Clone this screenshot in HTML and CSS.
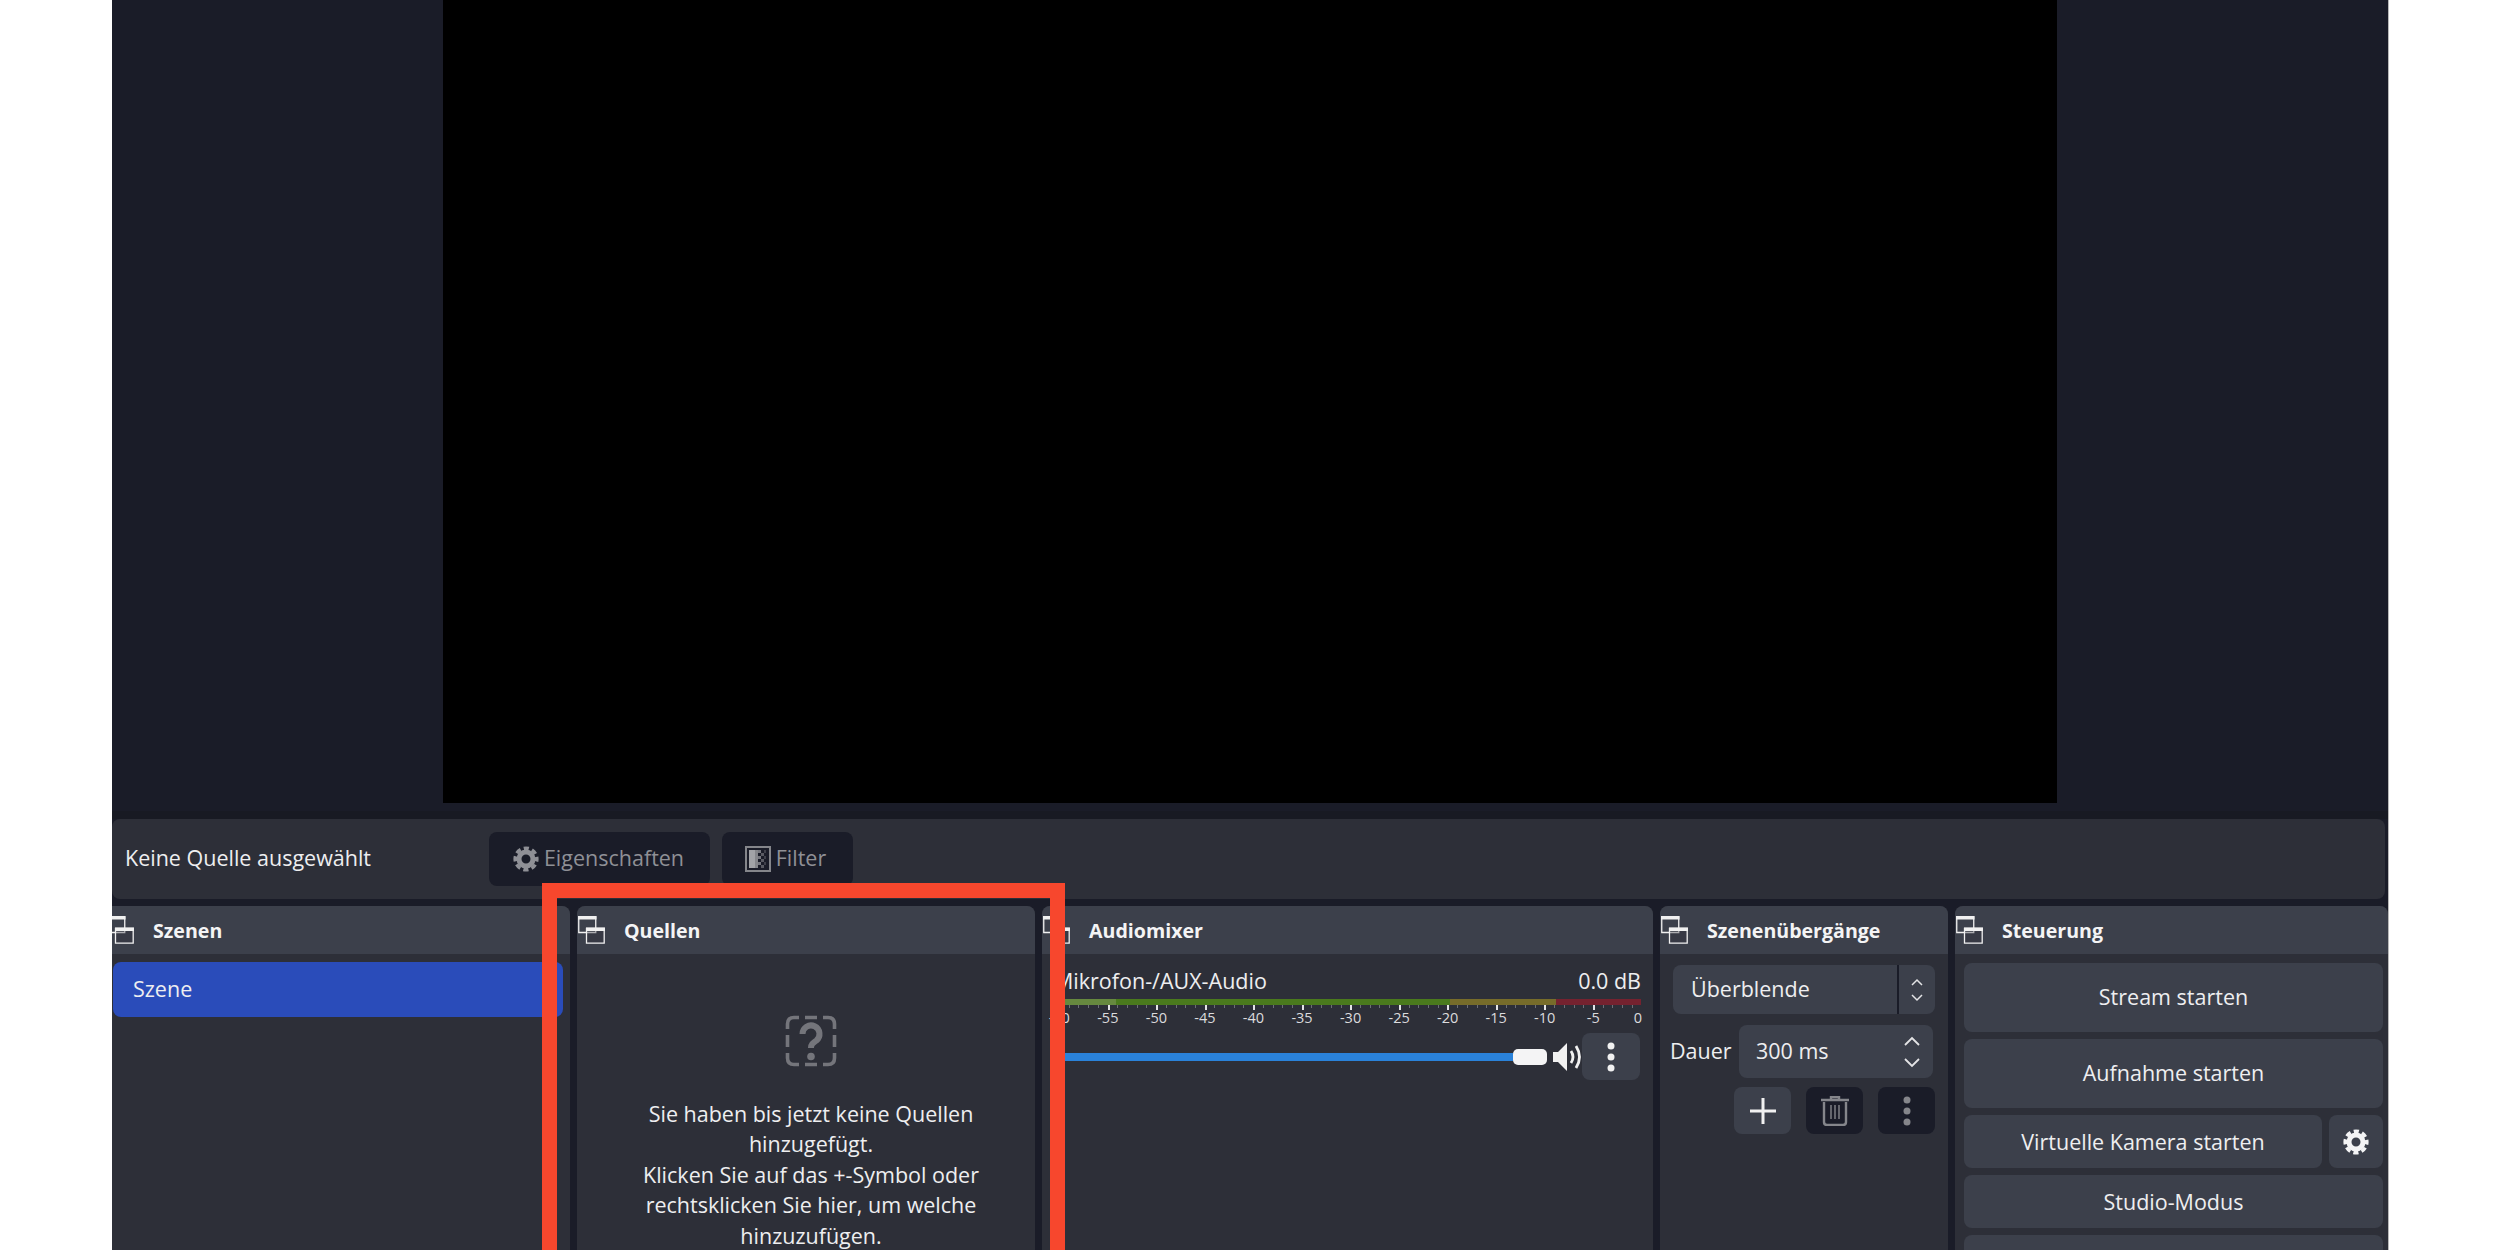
FILE: index.html
```html
<!DOCTYPE html>
<html lang="de">
<head>
    <meta charset="UTF-8">
    <title>OBS Studio</title>
    <link rel="stylesheet" href="styles.css">
</head>
<body>

    <svg class="defs" width="0" height="0">
        <symbol id="gear" viewBox="0 0 26 26">
            <circle cx="13" cy="13" r="7" fill="none" stroke="currentColor" stroke-width="5"></circle>
            <circle cx="13" cy="13" r="10.8" fill="none" stroke="currentColor" stroke-width="3.6" stroke-dasharray="5.2 3.28" stroke-dashoffset="2.6"></circle>
        </symbol>
        <symbol id="dock" viewBox="0 0 27 28">
            <path d="M.75 1h17v15.5H.75z" fill="none" stroke="currentColor" stroke-width="1.3"></path>
            <path d="M0 0h18.5v3.5H0z" fill="currentColor"></path>
            <path d="M8.5 12.5h17.7v14.7H8.5z" fill="#2d2f38" fill-opacity=".35" stroke="currentColor" stroke-width="1.3"></path>
            <path d="M8 11.5h19v3.5H8z" fill="currentColor"></path>
        </symbol>
        <symbol id="dots" viewBox="0 0 10 32">
            <circle cx="5" cy="5" r="3.5" fill="currentColor"></circle>
            <circle cx="5" cy="16" r="3.5" fill="currentColor"></circle>
            <circle cx="5" cy="27" r="3.5" fill="currentColor"></circle>
        </symbol>
    </svg>

    <div class="app">
        <div class="preview-area">
            <div class="preview"></div>
        </div>

        <div class="source-bar">
            <span class="source-name">Keine Quelle ausgewählt</span>
            <button class="btn-dark btn-props"><svg class="icon-gear"><use href="#gear"></use></svg>Eigenschaften</button>
            <button class="btn-dark btn-filter">
                <svg class="icon-filter" viewBox="0 0 26 26">
                    <rect x="1" y="1" width="24" height="24" fill="none" stroke="#85868b" stroke-width="2"></rect>
                    <rect x="4" y="4" width="6" height="18" fill="#a2a3a7"></rect>
                    <rect x="10" y="4" width="3" height="18" fill="#85868b"></rect>
                    <path d="M13 4h3v3h-3zM13 10h3v3h-3zM13 16h3v3h-3z" fill="#787980"></path>
                    <path d="M16 7h3v3h-3zM16 13h3v3h-3zM16 19h3v3h-3z" fill="#5a5b63"></path>
                    <path d="M19 4h2v3h-2zM19 10h2v3h-2zM19 16h2v3h-2z" fill="#3f404a"></path>
                </svg>Filter
            </button>
        </div>

        <div class="docks">
            <section class="dock dock-first">
                <div class="dock-head"><svg class="icon-dock"><use href="#dock"></use></svg><h2>Szenen</h2></div>
                <div class="scene-row">Szene</div>
            </section>

            <section class="dock">
                <div class="dock-head"><svg class="icon-dock"><use href="#dock"></use></svg><h2>Quellen</h2></div>
                <div class="empty">
                    <svg class="icon-empty" viewBox="0 0 52 52">
                        <path d="M2.5 14V9q0-6.500 6.500-6.500h5M38 2.500h5q6.500 0 6.500 6.500v5M49.500 38v5q0 6.500-6.500 6.500h-5M14 49.500H9q-6.500 0-6.500-6.500v-5M20 2.500h12M20 49.500h12M2.500 20v12M49.500 20v12" fill="none" stroke="#74757b" stroke-width="3.6"></path>
                        <path d="M17.500 19a8.500 8.500 0 1 1 13.800 6.600c-3.600 2.600-5.300 3.800-5.300 7.400" fill="none" stroke="#74757b" stroke-width="6"></path>
                        <circle cx="26" cy="41.500" r="3.800" fill="#74757b"></circle>
                    </svg>
                    <p>Sie haben bis jetzt keine Quellen<br>hinzugefügt.<br>Klicken Sie auf das +-Symbol oder<br>rechtsklicken Sie hier, um welche<br>hinzuzufügen.</p>
                </div>
            </section>

            <section class="dock">
                <div class="dock-head"><svg class="icon-dock"><use href="#dock"></use></svg><h2>Audiomixer</h2></div>
                <div class="mixer">
                    <div class="mixer-top"><span>Mikrofon-/AUX-Audio</span><span>0.0 dB</span></div>
                    <div class="meter">
                        <div class="meter-low"></div>
                        <div class="meter-green"></div>
                        <div class="meter-yellow"></div>
                        <div class="meter-red"></div>
                    </div>
                    <div class="meter-ticks"></div>
                    <div class="meter-labels">
                        <span>-60</span><span>-55</span><span>-50</span><span>-45</span><span>-40</span><span>-35</span><span>-30</span><span>-25</span><span>-20</span><span>-15</span><span>-10</span><span>-5</span><span>0</span>
                    </div>
                    <div class="fader-row">
                        <div class="fader-track"></div>
                        <div class="fader-handle"></div>
                        <svg class="icon-speaker" viewBox="0 0 29 32">
                            <path d="M0 11h5l9-9v28l-9-9H0z" fill="#f1f1f1"></path>
                            <path d="M18 10q4 6 0 12M23 5q7 11 0 22" fill="none" stroke="#f1f1f1" stroke-width="2.8"></path>
                        </svg>
                        <button class="btn-icon btn-mixer-menu"><svg class="icon-dots"><use href="#dots"></use></svg></button>
                    </div>
                </div>
            </section>

            <section class="dock">
                <div class="dock-head"><svg class="icon-dock"><use href="#dock"></use></svg><h2>Szenenübergänge</h2></div>
                <div class="transitions">
                    <div class="combo">
                        <span class="combo-value">Überblende</span>
                        <span class="combo-arrows">
                            <svg viewBox="0 0 14 28"><path d="M2 9l5-5 5 5M2 19l5 5 5-5" fill="none" stroke="#e4e4e6" stroke-width="1.500"></path></svg>
                        </span>
                    </div>
                    <div class="duration">
                        <span class="duration-label">Dauer</span>
                        <div class="spin">
                            <span>300 ms</span>
                            <svg viewBox="0 0 16 32"><path d="M1 9l7-7 7 7M1 23l7 7 7-7" fill="none" stroke="#e4e4e6" stroke-width="1.800"></path></svg>
                        </div>
                    </div>
                    <div class="transition-btns">
                        <button class="btn-icon">
                            <svg class="icon-plus" viewBox="0 0 26 26"><path d="M13 0v26M0 13h26" stroke="#f1f1f1" stroke-width="3"></path></svg>
                        </button>
                        <button class="btn-dark-icon">
                            <svg class="icon-trash" viewBox="0 0 28 30">
                                <path d="M0 4h28M10 4V1h8v3" fill="none" stroke="#85868b" stroke-width="2.400"></path>
                                <path d="M3 6v20q0 3 3 3h16q3 0 3-3V6" fill="none" stroke="#85868b" stroke-width="2.400"></path>
                                <path d="M10 9v14M14 9v14M18 9v14" stroke="#85868b" stroke-width="1.400"></path>
                            </svg>
                        </button>
                        <button class="btn-dark-icon"><svg class="icon-dots icon-dots-off"><use href="#dots"></use></svg></button>
                    </div>
                </div>
            </section>

            <section class="dock">
                <div class="dock-head"><svg class="icon-dock"><use href="#dock"></use></svg><h2>Steuerung</h2></div>
                <div class="controls">
                    <button class="ctl ctl-tall">Stream starten</button>
                    <button class="ctl ctl-tall">Aufnahme starten</button>
                    <div class="ctl-row">
                        <button class="ctl ctl-virtual">Virtuelle Kamera starten</button>
                        <button class="ctl ctl-gear"><svg class="icon-gear"><use href="#gear"></use></svg></button>
                    </div>
                    <button class="ctl">Studio-Modus</button>
                    <button class="ctl ctl-tall"></button>
                </div>
            </section>
        </div>
    </div>

    <!-- red highlight drawn over the screenshot -->
    <div class="highlight"></div>

</body>
</html>
```

FILE: styles.css
```css
* {
    margin: 0;
    padding: 0;
    box-sizing: border-box;
    font-family: "Open Sans", sans-serif;
}

body {
    position: relative;
    height: 1250px;
    overflow: hidden;
    background: white;
    color: #eeeef0;
    font-size: 21.5px;
}

.defs {
    position: absolute;
}

button {
    border: none;
    padding-bottom: 3px;
    font-size: 21.5px;
    color: #eeeef0;
}

.app {
    display: flex;
    flex-direction: column;
    width: 2276px;
    height: 1250px;
    margin-left: 112px;
    background: #1a1c28;
    box-shadow: 1px 0 0 #b9b9b9;
}

.preview-area {
    flex: none;
    height: 819px;
    padding-left: 331px;
    border-bottom: 8px solid #181a23;
}

.preview {
    width: 1614px;
    height: 803px;
    background: black;
}

/* Source toolbar */
.source-bar {
    display: flex;
    align-items: center;
    flex: none;
    height: 80px;
    margin-right: 3px;
    padding-left: 13px;
    background: #2d2f38;
    border-radius: 8px;
}

.source-name {
    width: 364px;
    padding-bottom: 3px;
}

.btn-dark {
    display: flex;
    align-items: center;
    justify-content: center;
    height: 54px;
    background: #1a1c28;
    color: #8f9096;
    border-radius: 8px;
}

.btn-props {
    width: 221px;
    gap: 5px;
    margin-right: 12px;
    padding-right: 2px;
}

.btn-filter {
    width: 131px;
    gap: 5px;
    padding-right: 4px;
}

.icon-gear {
    width: 26px;
    height: 26px;
}

.icon-filter {
    width: 26px;
    height: 26px;
    margin-top: 3px;
}

.btn-props .icon-gear {
    margin-top: 3px;
}

/* Docks */
.docks {
    display: grid;
    grid-template-columns: 458px 458px 611px 288px 433px;
    gap: 7px;
    flex: 1;
    margin-top: 7px;
    min-height: 0;
}

.dock {
    background: #2d2f38;
    border-radius: 8px 8px 0 0;
    overflow: hidden;
}

.dock-head {
    display: flex;
    align-items: center;
    gap: 19px;
    height: 48px;
    padding-left: 1px;
    background: #3c404b;
}

.dock-head h2 {
    font-size: 19.6px;
    font-weight: 700;
    color: #f4f4f5;
}

.icon-dock {
    flex: none;
    width: 27px;
    height: 28px;
    color: #f1f1f1;
}

.dock-first {
    border-top-left-radius: 0;
}

.dock-first .dock-head {
    padding-left: 0;
}

.dock-first .icon-dock {
    margin-left: -5px;
}

.scene-row {
    display: flex;
    align-items: center;
    height: 55px;
    margin: 8px 7px 0 1px;
    padding: 0 0 3px 20px;
    background: #2a4cba;
    border-radius: 8px;
}

/* Quellen empty state */
.empty {
    display: flex;
    flex-direction: column;
    align-items: center;
    padding: 61px 0 0 10px;
    text-align: center;
}

.icon-empty {
    width: 52px;
    height: 52px;
}

.empty p {
    margin-top: 31.5px;
    line-height: 30.6px;
}

/* Audiomixer */
.mixer {
    padding: 13px 12px 0 12px;
}

.mixer-top {
    display: flex;
    justify-content: space-between;
    height: 30px;
    line-height: 27px;
}

.meter {
    display: flex;
    height: 6px;
    width: 587px;
    margin-top: 2px;
}

.meter-low {
    width: 62px;
    background: #66893f;
}

.meter-green {
    width: 334px;
    background: #4a7a1d;
}

.meter-yellow {
    width: 106px;
    background: #776c2a;
}

.meter-red {
    flex: 1;
    background: #75222f;
}

.meter-ticks {
    width: 583px;
    height: 5px;
    margin-left: 5px;
    background:
        repeating-linear-gradient(to right, #e4e4e6 0 2px, transparent 2px 48.55px),
        repeating-linear-gradient(to right, #6d6f76 0 1px, transparent 1px 9.71px) 0 0 / 100% 3px no-repeat;
}

.meter-labels {
    display: flex;
    height: 16px;
    margin: 0 0 0 -19px;
    line-height: 16px;
    font-size: 14.5px;
    color: #dcdcde;
}

.meter-labels span {
    flex: 0 0 48.55px;
    text-align: center;
}

.meter-labels span:last-child {
    margin-left: -4px;
}

.fader-row {
    display: flex;
    align-items: center;
    height: 47px;
    margin: 7px 1px 0 0;
}

.fader-track {
    flex: 1;
    height: 8px;
    background: #2a82da;
}

.fader-handle {
    width: 34px;
    height: 16px;
    background: #f4f4f5;
    border-radius: 5px;
}

.icon-speaker {
    width: 29px;
    height: 32px;
    margin-left: 6px;
}

.btn-icon,
.btn-dark-icon {
    display: flex;
    align-items: center;
    justify-content: center;
    flex: none;
    width: 57px;
    height: 47px;
    padding: 0;
    background: #3c404b;
    border-radius: 8px;
}

.btn-dark-icon {
    background: #1a1c28;
}

.btn-mixer-menu {
    width: 58px;
}

.icon-dots {
    width: 10px;
    height: 32px;
    color: #f1f1f1;
}

.icon-dots-off {
    color: #85868b;
}

.icon-plus {
    width: 26px;
    height: 26px;
}

.icon-trash {
    width: 28px;
    height: 30px;
}

/* Szenenuebergaenge */
.transitions {
    padding: 11px 13px 0 10px;
}

.combo {
    display: flex;
    align-items: center;
    height: 49px;
    margin-left: 3px;
    background: #3c404b;
    border-radius: 8px;
}

.combo-value {
    width: 226px;
    height: 49px;
    padding-left: 18px;
    border-right: 2px solid #1a1c28;
    line-height: 47px;
}

.combo-arrows {
    display: flex;
    justify-content: center;
    flex: 1;
}

.combo-arrows svg {
    width: 14px;
    height: 28px;
}

.duration {
    display: flex;
    align-items: center;
    justify-content: space-between;
    height: 53px;
    margin: 11px 2px 0 0;
}

.duration-label {
    padding-bottom: 3px;
}

.spin {
    display: flex;
    align-items: center;
    justify-content: space-between;
    width: 194px;
    height: 53px;
    padding: 0 13px 0 17px;
    background: #3c404b;
    border-radius: 8px;
}

.spin span {
    padding-bottom: 3px;
}

.spin svg {
    width: 16px;
    height: 32px;
}

.transition-btns {
    display: flex;
    justify-content: flex-end;
    gap: 15px;
    margin-top: 9px;
}

/* Steuerung */
.controls {
    display: flex;
    flex-direction: column;
    gap: 7px;
    padding: 9px 5px 0 9px;
}

.ctl {
    flex: none;
    height: 53px;
    padding-bottom: 1px;
    background: #3c404b;
    border-radius: 8px;
}

.ctl-tall {
    height: 69px;
    padding-bottom: 3px;
}

.ctl-row {
    display: flex;
    gap: 7px;
}

.ctl-virtual {
    flex: 1;
}

.ctl-gear {
    display: flex;
    align-items: center;
    justify-content: center;
    width: 54px;
    padding: 0;
    color: #f4f4f5;
}

/* Highlight overlay */
.highlight {
    position: absolute;
    left: 542px;
    top: 883px;
    width: 523px;
    height: 400px;
    border: 15px solid #f7472d;
    pointer-events: none;
}
```
